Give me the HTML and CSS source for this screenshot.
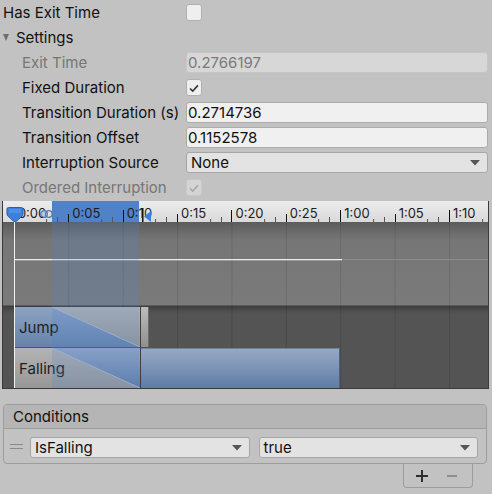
FILE: index.html
```html
<!DOCTYPE html>
<html>
<head>
<meta charset="utf-8">
<link rel="stylesheet" href="styles.css">
</head>
<body>
<div class="inspector">
  <div class="row"><span class="label">Has Exit Time</span><span class="check"></span></div>
  <div class="row"><span class="label foldout"><span class="tri"></span>Settings</span></div>
  <div class="row indent disabled"><span class="label">Exit Time</span><span class="field off">0.2766197</span></div>
  <div class="row indent"><span class="label">Fixed Duration</span><span class="check"><svg width="16" height="16" viewBox="0 0 16 16"><polyline points="3.5,8.5 6.5,11.5 12.5,5" fill="none" stroke="#333" stroke-width="1.7"/></svg></span></div>
  <div class="row indent"><span class="label">Transition Duration (s)</span><span class="field">0.2714736</span></div>
  <div class="row indent"><span class="label">Transition Offset</span><span class="field">0.1152578</span></div>
  <div class="row indent"><span class="label">Interruption Source</span><span class="field select">None<svg class="arrow" width="10" height="6" viewBox="0 0 10 6"><polygon points="0,0 10,0 5,5.5" fill="#555"/></svg></span></div>
  <div class="row indent disabled"><span class="label">Ordered Interruption</span><span class="check off"><svg width="16" height="16" viewBox="0 0 16 16"><polyline points="3.5,8.5 6.5,11.5 12.5,5" fill="none" stroke="#a6a6a6" stroke-width="1.7"/></svg></span></div>
</div>

<div class="timeline">
  <div class="ruler">
    <div class="ruler-range"></div>
    <div class="scale">
      <span class="mark">0:00</span>
      <span class="mark">0:05</span>
      <span class="mark">0:10</span>
      <span class="mark">0:15</span>
      <span class="mark">0:20</span>
      <span class="mark">0:25</span>
      <span class="mark">1:00</span>
      <span class="mark">1:05</span>
      <span class="mark">1:10</span>
    </div>
    <svg class="pin" width="18" height="17" viewBox="0 0 18 17"><path d="M2.5 1.5 H15.5 Q17 1.5 17 3 V8 Q17 10 15 11 L9 16.5 L3 11 Q1 10 1 8 V3 Q1 1.5 2.5 1.5 Z" fill="#3d80dc" stroke="#2b5fa6" stroke-width="1"/><path d="M3 3 H15 V7 H3 Z" fill="#5c99ea" opacity="0.6"/></svg>
    <svg class="loop" width="13" height="10" viewBox="0 0 13 10"><circle cx="4" cy="5" r="3.3" fill="#b7c8e2" stroke="#5579ad" stroke-width="1.3"/><circle cx="8.8" cy="5" r="3.3" fill="none" stroke="#5579ad" stroke-width="1.3"/></svg>
    <svg class="endmark" width="10" height="15" viewBox="0 0 10 15"><rect x="0" y="0" width="1.5" height="15" fill="#111"/><polygon points="9,3 9,14 2,8.5" fill="#3d80dc"/></svg>
  </div>
  <div class="curve">
    <div class="curve-line"></div>
    <div class="curve-faint"></div>
  </div>
  <div class="tracks">
    <div class="clip jump">
      <svg class="trans" width="88" height="40" viewBox="0 0 88 40" preserveAspectRatio="none">
        <defs><linearGradient id="gg" x1="0" y1="0" x2="0" y2="1"><stop offset="0" stop-color="#b4b4b4"/><stop offset="1" stop-color="#969696"/></linearGradient></defs>
        <polygon points="0,0 88,0 88,40" fill="url(#gg)"/>
        <line x1="0" y1="0" x2="88" y2="40" stroke="#b9c3d2" stroke-width="0.8"/>
      </svg>
      <span class="clip-name">Jump</span>
    </div>
    <div class="jump-tail"></div>
    <div class="clip falling">
      <svg class="trans" width="88" height="40" viewBox="0 0 88 40" preserveAspectRatio="none">
        <defs><linearGradient id="bg" x1="0" y1="0" x2="0" y2="1"><stop offset="0" stop-color="#96a9c3"/><stop offset="1" stop-color="#5f7ca5"/></linearGradient></defs>
        <polygon points="0,0 88,0 88,40" fill="url(#bg)"/>
        <line x1="0" y1="0" x2="88" y2="40" stroke="#b9c3d2" stroke-width="0.8"/>
      </svg>
      <div class="falling-rest"></div>
      <span class="clip-name">Falling</span>
    </div>
    <div class="cut"></div>
  </div>
  <div class="range"></div>
  <div class="playhead"></div>
</div>

<div class="conditions">
  <div class="cond-header">Conditions</div>
  <div class="cond-body">
    <span class="handle"></span>
    <span class="field select">IsFalling<svg class="arrow" width="10" height="6" viewBox="0 0 10 6"><polygon points="0,0 10,0 5,5.5" fill="#555"/></svg></span>
    <span class="field select">true<svg class="arrow" width="10" height="6" viewBox="0 0 10 6"><polygon points="0,0 10,0 5,5.5" fill="#555"/></svg></span>
  </div>
</div>
<div class="cond-footer">
  <svg width="14" height="14" viewBox="0 0 14 14"><path d="M7 1 V13 M1 7 H13" stroke="#2e2e2e" stroke-width="2"/></svg>
  <svg width="14" height="14" viewBox="0 0 14 14"><path d="M2 7 H12" stroke="#8e8e8e" stroke-width="2"/></svg>
</div>
</body>
</html>
```

FILE: styles.css
```css
* { box-sizing: border-box; }
html, body { margin: 0; padding: 0; }
body {
  background: #c2c2c2;
  font-family: Inter, "Noto Sans", sans-serif;
  font-size: 15px;
  color: #111;
  width: 492px;
  height: 494px;
  overflow: hidden;
}

/* inspector rows */
.inspector { padding-left: 3px; }
.row { display: flex; align-items: center; height: 25px; }
.label { width: 183px; flex: none; white-space: nowrap; display: flex; align-items: center; }
.indent .label { padding-left: 19px; }
.disabled .label { color: #767676; }
.tri {
  width: 0; height: 0;
  border-left: 3.5px solid transparent;
  border-right: 3.5px solid transparent;
  border-top: 7px solid #6e6e6e;
  margin-right: 7px;
}
.field {
  flex: 1;
  margin-right: 4px;
  height: 21px;
  border: 1px solid #ababab;
  border-radius: 3px;
  background: #f0f0f0;
  padding-left: 1px;
  display: flex;
  align-items: center;
  white-space: nowrap;
}
.field.off { background: #d7d7d7; border-color: #c6c6c6; color: #7a7a7a; }
.select {
  background: #e3e3e3;
  border-color: #a6a6a6;
  justify-content: space-between;
  padding: 0 7px 0 4px;
}
.arrow { flex: none; margin-top: 1px; }
.check {
  width: 16px; height: 17px;
  border: 1px solid #b0b0b0;
  border-radius: 3px;
  background: #efefef;
  display: flex; align-items: center; justify-content: center;
}
.check.off { background: #d4d4d4; border-color: #c8c8c8; }

/* timeline */
.timeline {
  margin: 1px 0 0 2px;
  width: 487px;
  border: 1px solid #3a3a3a;
  border-top: 0;
  position: relative;
  overflow: hidden;
}
.ruler {
  height: 21px;
  position: relative;
  overflow: hidden;
  background: linear-gradient(#ececec, #d9d9d9);
}
.ruler-range {
  position: absolute; left: 49px; top: 0; bottom: 0; width: 87px;
  background: #5181c7;
}
.scale { position: absolute; left: 10.9px; top: 0; bottom: 0; display: flex; }
.mark {
  flex: none;
  width: 54.4px;
  position: relative;
  padding: 4px 0 0 4px;
  font-size: 13px;
  line-height: 17px;
  color: #1c1c1c;
}
.mark::before {
  content: ""; position: absolute; left: 0; bottom: 0;
  width: 1px; height: 8px; background: #111;
}
.mark:nth-child(odd)::before { height: 12px; }
.mark::after {
  content: ""; position: absolute; left: 43.5px; bottom: 0;
  width: 1px; height: 5px; background: #555;
  box-shadow: -10.9px 2px 0 #555;
}
.pin { position: absolute; left: 3px; top: 5px; }
.loop { position: absolute; left: 37px; top: 8px; }
.endmark { position: absolute; left: 139px; top: 7px; }

.curve {
  height: 83px;
  position: relative;
  background:
    linear-gradient(90deg, rgba(0,0,0,0.11) 0 1px, transparent 1px) 10.9px 0 / 54.4px 100% repeat-x,
    linear-gradient(#5c5c5c, #767676 18px, #7a7a7a);
}
.curve-line {
  position: absolute; left: 11px; top: 37px; width: 328px; height: 1px;
  background: #ececec;
  box-shadow: 0 1px 0 rgba(255,255,255,0.25);
}
.curve-faint {
  position: absolute; left: 339px; right: 0; top: 37px; height: 1px;
  background: #8c8c8c;
}
.tracks {
  height: 83px;
  position: relative;
  background:
    linear-gradient(90deg, rgba(0,0,0,0.12) 0 1px, transparent 1px) 10.9px 0 / 54.4px 100% repeat-x,
    linear-gradient(#5a5a5a 0 1px, #3c3c3c 1px, #4f4f4f 6px, #545454 9px);
}
.clip {
  position: absolute; left: 12px; height: 40px;
  display: flex; align-items: center;
}
.clip-name { position: relative; padding-left: 4px; color: #1e1e1e; }
.trans { position: absolute; left: 37px; top: 0; }
.jump {
  top: 2px; width: 125px;
  background: linear-gradient(#8ca2c2, #6583ac);
}
.jump-tail {
  position: absolute; left: 138px; top: 2px; width: 8px; height: 40px;
  background: linear-gradient(#bdbdbd, #8f8f8f);
  border-right: 1px solid #6a6a6a;
}
.falling {
  top: 43px; width: 325px; height: 40px;
  background: linear-gradient(#b3b3b3, #979797);
}
.falling-rest {
  position: absolute; left: 125px; right: 0; top: 0; bottom: 0;
  background: linear-gradient(#96a9c3, #5f7ca5);
  border-top: 1px solid #6d7f9c;
  border-right: 1px solid #4f6284;
}
.cut {
  position: absolute; left: 137px; top: 2px; width: 1px; height: 81px;
  background: #3e3e3e;
}
.range {
  position: absolute; left: 49px; width: 87px; top: 21px; bottom: 0;
  background: rgba(80, 130, 210, 0.22);
}
.playhead {
  position: absolute; left: 11px; top: 21px; bottom: 0; width: 1px;
  background: #f2f2f2;
}

/* conditions */
.conditions {
  margin: 15px 5px 0 3px;
  border: 1px solid #9d9d9d;
  border-radius: 4px;
}
.cond-header {
  height: 24px;
  background: #b5b5b5;
  border-bottom: 1px solid #9d9d9d;
  border-radius: 3px 3px 0 0;
  padding-left: 9px;
  display: flex; align-items: center;
}
.cond-body {
  display: flex; align-items: center;
  padding: 8px 8px 5px 6px;
}
.cond-body .field { margin-right: 0; flex: 1; }
.cond-body .field + .field { margin-left: 9px; }
.handle {
  flex: none;
  width: 13px; height: 5px;
  border-top: 1.3px solid #8a8a8a;
  border-bottom: 1.3px solid #8a8a8a;
  margin-right: 7px;
  margin-top: -2px;
}
.cond-footer {
  margin: 0 19px 0 auto;
  width: 70px; height: 24px;
  border: 1px solid #9d9d9d;
  border-top: 0;
  border-radius: 0 0 4px 4px;
  display: flex; align-items: center;
  padding-left: 11px;
  gap: 16px;
}
```
